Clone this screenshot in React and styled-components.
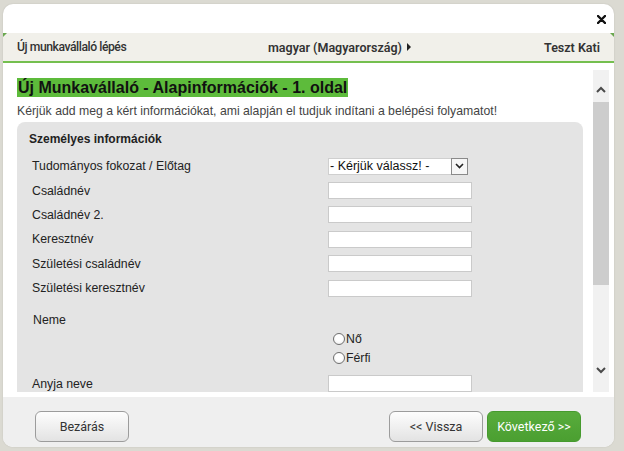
import React from "react";
import styled, { createGlobalStyle } from "styled-components";

const GlobalStyle = createGlobalStyle`
  html, body { margin: 0; padding: 0; background: #dbdad2; }
  body { font-family: "Liberation Sans", Arial, sans-serif; }
  * { box-sizing: border-box; }
`;

const Page = styled.div`
  height: 451px;
  padding: 4px 10px 4px 3px;
`;

const Modal = styled.div`
  height: 443px;
  background: #ffffff;
  border-radius: 10px;
  overflow: hidden;
  display: flex;
  flex-direction: column;
  box-shadow: 0 0 2px rgba(0, 0, 0, 0.12);
`;

const TopBar = styled.div`
  height: 29px;
  flex: none;
  display: flex;
  align-items: center;
  justify-content: flex-end;
  padding: 2px 8px 0 0;
`;

const CloseBtn = styled.span`
  display: flex;
  width: 9px;
  height: 9px;
`;

const HeaderBar = styled.div`
  position: relative;
  flex: none;
  height: 30px;
  background: #f1f0ea;
  border-bottom: 2px solid #74bf4f;
  display: grid;
  grid-template-columns: 251px auto 1fr;
  align-items: center;
  padding: 0 14px;
  font-family: Roboto, "Open Sans", sans-serif;
  color: #333;
  &::before, &::after {
    content: "";
    position: absolute;
    top: 0;
    width: 0;
    height: 0;
    border-style: solid;
  }
  &::before {
    left: 0;
    border-width: 4px 4px 0 0;
    border-color: #6aa84f transparent transparent transparent;
  }
  &::after {
    right: 0;
    border-width: 0 4px 4px 0;
    border-color: transparent #6aa84f transparent transparent;
  }
`;

const HeaderText = styled.span`
  justify-self: ${(p) => p.$align || "start"};
  font-weight: ${(p) => (p.$strong ? 600 : 500)};
  font-size: ${(p) => (p.$strong ? "12.5px" : "12.2px")};
  letter-spacing: ${(p) => (p.$strong ? "0" : "-0.45px")};
  display: flex;
  align-items: center;
  gap: 5px;
`;

const Body = styled.div`
  flex: 1;
  min-height: 0;
  display: flex;
  padding: 7px 5px 5px 14px;
`;

const ScrollContent = styled.div`
  flex: 1;
  overflow: hidden;
  padding-top: 8px;
`;

const Title = styled.h1`
  display: inline-block;
  margin: 0;
  background: #5dbb3b;
  color: #111;
  font-size: 16px;
  line-height: 19px;
  font-weight: bold;
  padding: 0 1px;
`;

const Subtitle = styled.p`
  margin: 6px 0 0;
  font-size: 12.25px;
  line-height: 16px;
  color: #444;
`;

const Panel = styled.div`
  margin: 3px 10px 0 0;
  background: #e4e4e4;
  border-radius: 8px 8px 0 0;
  padding: 8px 0 0 12px;
  height: 400px;
`;

const PanelHeading = styled.div`
  font-size: 12px;
  font-weight: bold;
  line-height: 18px;
  color: #222;
  margin-bottom: 6px;
`;

const Form = styled.div`
  padding-left: 3px;
`;

const Row = styled.div`
  display: grid;
  grid-template-columns: 296px auto;
  align-items: center;
  height: 24.4px;
  margin-top: ${(p) => p.$mt || 0}px;
`;

const Label = styled.label`
  font-size: 12.3px;
  color: #222;
`;

const TextInput = styled.input`
  width: 144px;
  height: 17px;
  border: 1px solid #cacaca;
  background: #fff;
  margin: 0;
  padding: 0 2px;
  outline: none;
`;

const SelectBox = styled.div`
  width: 140px;
  height: 17px;
  border: 1px solid #cfcfcf;
  background: #fff;
  display: flex;
  align-items: center;
  justify-content: space-between;
  font-size: 12.5px;
  color: #111;
  padding-left: 1px;
`;

const SelectArrow = styled.span`
  width: 17px;
  height: 17px;
  margin: -1px -1px -1px 0;
  border: 1px solid #8a8a8a;
  background: #f6f6f6;
  display: flex;
  align-items: center;
  justify-content: center;
`;

const NemeBlock = styled.div`
  padding-top: 12px;
`;

const NemeLabel = styled(Label)`
  display: block;
  line-height: 16px;
  padding-left: 1px;
`;

const RadioGroup = styled.div`
  margin: 1px 0 0 301px;
  display: flex;
  flex-direction: column;
`;

const RadioOption = styled.label`
  display: flex;
  align-items: center;
  height: 19px;
  font-size: 12.3px;
  color: #222;
  gap: 1px;
`;

const RadioCircle = styled.span`
  width: 12px;
  height: 12px;
  border-radius: 50%;
  border: 1px solid #6f6f6f;
  background: radial-gradient(circle at 50% 40%, #ffffff 40%, #e8e8e8 100%);
`;

const Scrollbar = styled.div`
  width: 16px;
  flex: none;
  background: #f1f1f1;
  display: flex;
  flex-direction: column;
`;

const ScrollArrow = styled.div`
  height: ${(p) => p.$h}px;
  display: flex;
  justify-content: center;
  align-items: ${(p) => (p.$down ? "flex-start" : "flex-end")};
  padding: ${(p) => (p.$down ? "5px 0 0" : "0 0 9px")};
`;

const Thumb = styled.div`
  height: 183px;
  background: #cdcdcd;
`;

const Track = styled.div`
  flex: 1;
`;

const Footer = styled.div`
  flex: none;
  height: 50px;
  background: #efefef;
  display: flex;
  align-items: flex-start;
  padding: 14px 33px 0 32px;
  gap: 4px;
`;

const Button = styled.button`
  width: 94px;
  height: 31px;
  border-radius: 6px;
  font-family: Roboto, "Open Sans", sans-serif;
  font-size: 12.5px;
  cursor: pointer;
  margin-left: ${(p) => (p.$push ? "auto" : "0")};
  border: 1px solid ${(p) => (p.$primary ? "#469a2e" : "#9c9c9c")};
  color: ${(p) => (p.$primary ? "#ffffff" : "#333333")};
  background: ${(p) =>
    p.$primary
      ? "linear-gradient(#58ac3c, #4b9f31)"
      : "linear-gradient(#fdfdfd, #e3e3e3)"};
`;

const Chevron = ({ up }) => (
  <svg width="10" height="7" viewBox="0 0 10 7">
    <polyline
      points={up ? "1,6 5,2 9,6" : "1,1 5,5 9,1"}
      fill="none"
      stroke="#4a4a4a"
      strokeWidth="2"
    />
  </svg>
);

const SmallChevron = () => (
  <svg width="9" height="6" viewBox="0 0 9 6">
    <polyline points="1,1 4.5,4.5 8,1" fill="none" stroke="#222" strokeWidth="1.6" />
  </svg>
);

const fields = [
  "Családnév",
  "Családnév 2.",
  "Keresztnév",
  "Születési családnév",
  "Születési keresztnév",
];

export default function App() {
  return (
    <>
      <GlobalStyle />
      <Page>
        <Modal>
          <TopBar>
            <CloseBtn>
              <svg width="9" height="9" viewBox="0 0 9 9">
                <path d="M1 1 L8 8 M8 1 L1 8" stroke="#111" strokeWidth="2.4" strokeLinecap="round" />
              </svg>
            </CloseBtn>
          </TopBar>
          <HeaderBar>
            <HeaderText>Új munkavállaló lépés</HeaderText>
            <HeaderText $strong>
              magyar (Magyarország)
              <svg width="4" height="8" viewBox="0 0 4 8">
                <path d="M0 0 L4 4 L0 8 Z" fill="#222" />
              </svg>
            </HeaderText>
            <HeaderText $align="end" $strong>Teszt Kati</HeaderText>
          </HeaderBar>
          <Body>
            <ScrollContent>
              <Title>Új Munkavállaló - Alapinformációk - 1. oldal</Title>
              <Subtitle>
                Kérjük add meg a kért információkat, ami alapján el tudjuk indítani a belépési folyamatot!
              </Subtitle>
              <Panel>
                <PanelHeading>Személyes információk</PanelHeading>
                <Form>
                  <Row>
                    <Label>Tudományos fokozat / Előtag</Label>
                    <SelectBox>
                      <span>- Kérjük válassz! -</span>
                      <SelectArrow>
                        <SmallChevron />
                      </SelectArrow>
                    </SelectBox>
                  </Row>
                  {fields.map((f) => (
                    <Row key={f}>
                      <Label>{f}</Label>
                      <TextInput type="text" />
                    </Row>
                  ))}
                  <NemeBlock>
                    <NemeLabel>Neme</NemeLabel>
                    <RadioGroup>
                      <RadioOption>
                        <RadioCircle />
                        Nő
                      </RadioOption>
                      <RadioOption>
                        <RadioCircle />
                        Férfi
                      </RadioOption>
                    </RadioGroup>
                  </NemeBlock>
                  <Row $mt={4}>
                    <Label>Anyja neve</Label>
                    <TextInput type="text" />
                  </Row>
                </Form>
              </Panel>
            </ScrollContent>
            <Scrollbar>
              <ScrollArrow $h={32}>
                <Chevron up />
              </ScrollArrow>
              <Thumb />
              <Track />
              <ScrollArrow $h={30} $down>
                <Chevron />
              </ScrollArrow>
            </Scrollbar>
          </Body>
          <Footer>
            <Button>Bezárás</Button>
            <Button $push>&lt;&lt; Vissza</Button>
            <Button $primary>Következő &gt;&gt;</Button>
          </Footer>
        </Modal>
      </Page>
    </>
  );
}
